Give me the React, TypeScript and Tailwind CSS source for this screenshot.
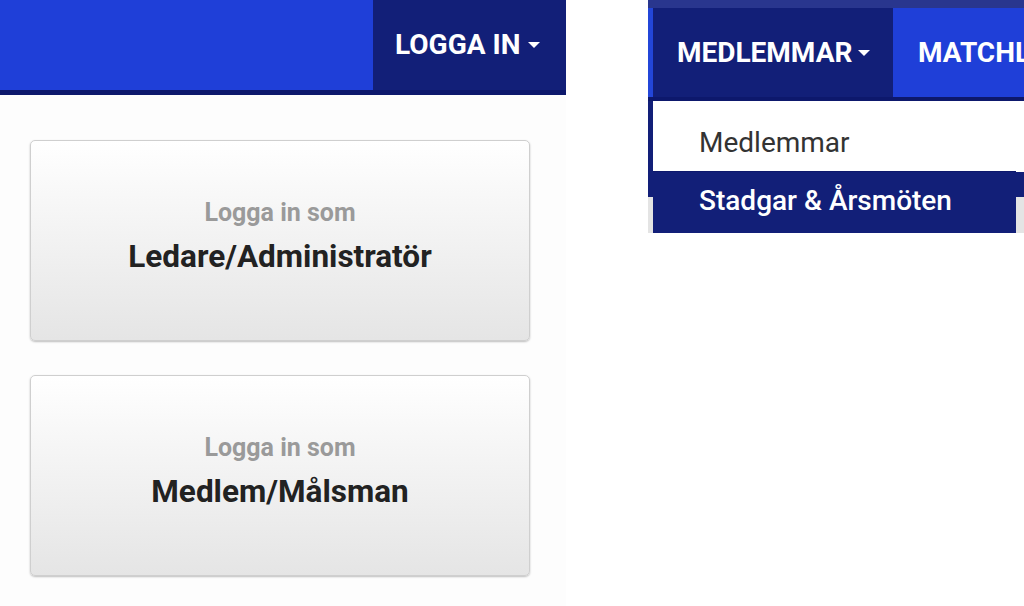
import React from "react";

function Caret() {
  return <span className="inline-block w-0 h-0 border-x-[6px] border-x-transparent border-t-[6px] border-t-white" />;
}

function LoginCard({ role }: { role: string }) {
  return (
    <button className="w-[500px] h-[201px] flex flex-col items-center justify-center pb-[8px] rounded-[5px] border border-[#cfcfcf] bg-linear-to-b from-white to-[#e5e5e5] shadow-[0_1px_2px_rgba(0,0,0,0.25)]">
      <span className="text-[25px] leading-[28px] font-bold text-[#9a9a9a]">Logga in som</span>
      <span className="mt-[12px] text-[31.5px] leading-[36px] font-bold text-[#222]">{role}</span>
    </button>
  );
}

export default function App() {
  return (
    <div className="w-[1024px] h-[606px] overflow-hidden bg-white flex font-['Roboto',sans-serif]">
      {/* left: logga in dropdown */}
      <div className="w-[566px] shrink-0 flex flex-col">
        <div className="h-[90px] bg-[#1f3fd8] flex justify-end">
          <div className="w-[193px] bg-[#121f78] flex items-center pl-[22px] gap-[8px]">
            <span className="text-white text-[28px] font-bold leading-none">LOGGA IN</span>
            <Caret />
          </div>
        </div>
        <div className="h-[5px] bg-[#0d186c]" />
        <div className="flex-1 bg-[#fdfdfd] rounded-tr-[6px] pt-[45px] px-[30px] flex flex-col gap-[34px]">
          <LoginCard role="Ledare/Administratör" />
          <LoginCard role="Medlem/Målsman" />
        </div>
      </div>

      {/* right: medlemmar dropdown */}
      <div className="ml-[82px] w-[376px] shrink-0 min-w-0 flex flex-col">
        <div className="h-[8px] bg-[#29368e]" />
        <div className="h-[89px] flex">
          <div className="w-[5px] shrink-0 bg-[#2346d8]" />
          <div className="w-[240px] shrink-0 bg-[#121f78] flex items-center pl-[24px] gap-[6px]">
            <span className="text-white text-[28px] font-bold leading-none">MEDLEMMAR</span>
            <Caret />
          </div>
          <div className="flex-1 min-w-0 bg-[#1f3fd8] flex items-center pl-[25px] overflow-hidden">
            <span className="text-white text-[28px] font-bold leading-none whitespace-nowrap">MATCHL</span>
          </div>
        </div>
        <div className="h-[4px] bg-[#0d186c]" />
        <div className="h-[132px] flex">
          <div className="w-[5px] shrink-0 flex flex-col">
            <div className="h-[96px] bg-[#121f78]" />
            <div className="flex-1 bg-[#e4e4e4]" />
          </div>
          <div className="w-[363px] shrink-0 flex flex-col">
            <div className="h-[71px] bg-white rounded-t-[6px] flex items-center pl-[46px] pt-[14px] border-b border-[#0d186c]">
              <span className="text-[28px] text-[#333] leading-none">Medlemmar</span>
            </div>
            <div className="flex-1 bg-[#121f78] flex items-center pl-[46px] pb-[4px]">
              <span className="text-[28px] font-medium text-white leading-none">Stadgar &amp; Årsmöten</span>
            </div>
          </div>
          <div className="flex-1 flex flex-col">
            <div className="h-[71px] bg-white" />
            <div className="h-[25px] bg-[#121f78]" />
            <div className="flex-1 bg-[#e4e4e4]" />
          </div>
        </div>
      </div>
    </div>
  );
}
